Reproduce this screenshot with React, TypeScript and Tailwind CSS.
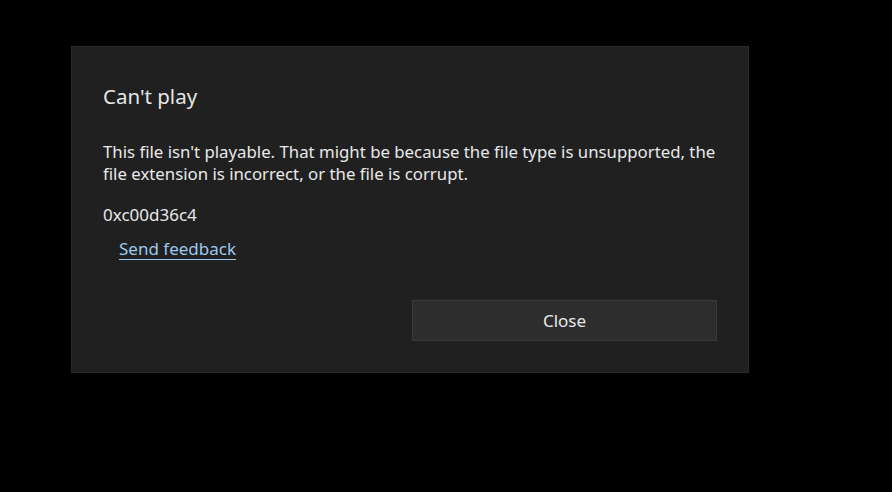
import React from "react";

export default function App() {
  return (
    <div className="w-[892px] h-[492px] bg-black overflow-hidden" style={{ fontFamily: '"Noto Sans", "Open Sans", sans-serif' }}>
      <div className="pt-[46px] pl-[71px]">
        <div className="w-[678px] h-[327px] bg-[#202020] border border-[#2a2a2a] flex flex-col pl-[31px] pr-[24px] pt-[36px]">
          <div className="text-[20.5px] leading-[26px] text-[#e6e6e6]">Can't play</div>
          <div className="mt-[32px] text-[16.8px] leading-[22px] text-[#e8e8e8]">
            This file isn't playable. That might be because the file type is unsupported, the file extension is incorrect, or the file is corrupt.
          </div>
          <div className="mt-[19px] text-[17px] leading-[22px] text-[#e8e8e8]">0xc00d36c4</div>
          <div className="mt-[11px] pl-[16px]">
            <span className="text-[17px] leading-[22px] text-[#9dc9ee] underline underline-offset-[4px]">Send feedback</span>
          </div>
          <div className="flex justify-end mt-[39px] pr-[7px]">
            <button className="w-[305px] h-[41px] bg-[#2d2d2d] border border-[#3a3a3a] text-[17px] text-[#e8e8e8]">Close</button>
          </div>
        </div>
      </div>
    </div>
  );
}
